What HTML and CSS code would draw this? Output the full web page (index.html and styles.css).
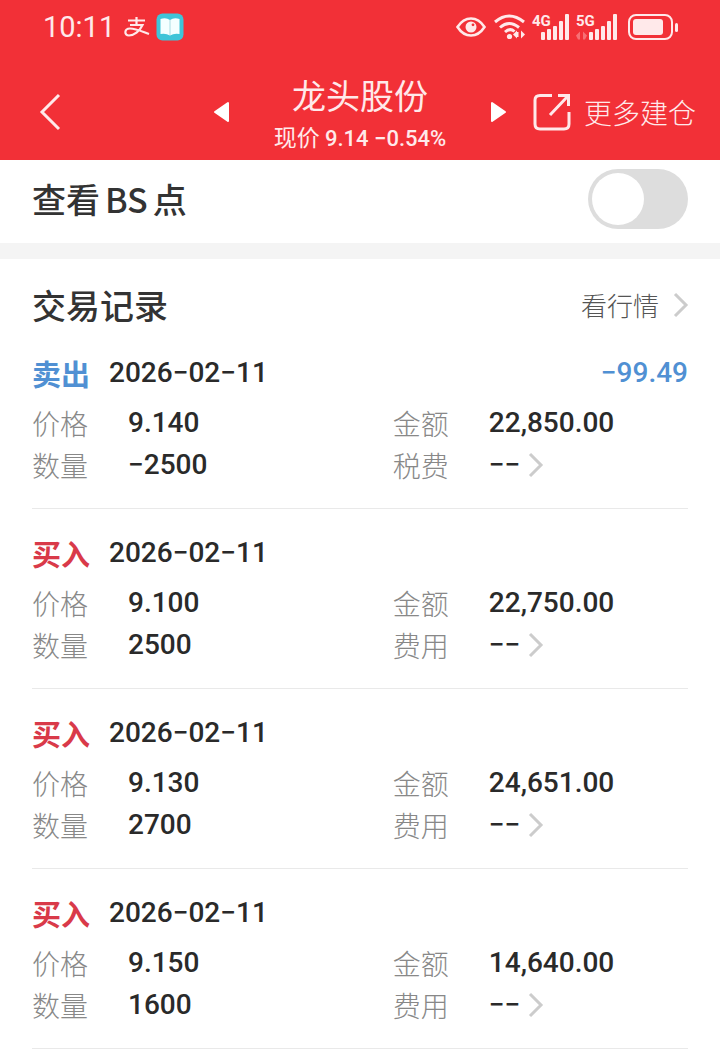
FILE: index.html
```html
<!DOCTYPE html>
<html lang="zh-CN">
<head>
<meta charset="utf-8">
<meta name="viewport" content="width=device-width, initial-scale=1">
<title>龙头股份</title>
<link rel="stylesheet" href="styles.css">
</head>
<body>
<header class="top">
  <div class="status">
    <div class="status-left">
      <time class="clock">10:11</time>
      <svg class="pay" width="26" height="20" viewBox="0 0 26 20" fill="none" stroke="currentColor" stroke-width="2.200"><path d="M4 3.500h17M12.500 0v8M6 8h12.500C15.500 14.500 10 18.500 5 18.500 0 18.500 0 11.500 6 11.500 12 11.500 18 14.500 25 17"/></svg>
      <svg width="28" height="28" viewBox="0 0 28 28"><rect width="27" height="27" x=".5" y=".5" rx="6" fill="#3fc4d8"/><path d="M4.500 6Q10 4 14 7 18 4 23.500 6V21Q18 20 14 22.500 10 20 4.500 21Z" fill="#f4ffff"/><path d="M14 7v15" stroke="#a8dce2"/></svg>
    </div>
    <div class="status-right">
      <svg width="30" height="20" viewBox="0 0 30 20" fill="none" stroke="currentColor"><path d="M1.500 10Q7 1.500 15 1.500T28.500 10Q23 18.500 15 18.500T1.500 10Z" stroke-width="2.600"/><circle cx="15" cy="10" r="5.500" fill="currentColor" stroke="none"/><circle cx="17" cy="7.800" r="1.400" fill="#f23037" stroke="none"/></svg>
      <svg width="32" height="26" viewBox="0 0 32 26" fill="none" stroke="currentColor" stroke-width="3"><path d="M1 8Q15-4 30 8M6 13.500Q15 5.500 25 13.500M11 18Q16 13.500 20.500 17.500"/><circle cx="15.500" cy="22.500" r="2.600" fill="currentColor" stroke="none"/><path d="M19 20.500l4-4v8zM31 20.500l-4-4v8zM23 18h1.500v5H23z" fill="currentColor" stroke="none"/></svg>
      <svg class="signal" width="38" height="28" viewBox="0 0 38 28" fill="currentColor"><text x="0" y="13">4G</text><rect x="9" y="19" width="4" height="8" rx="1"/><rect x="15" y="16" width="4" height="11" rx="1"/><rect x="21" y="13" width="4" height="14" rx="1"/><rect x="27" y="8" width="4" height="19" rx="1"/><rect x="33" y="1" width="4" height="26" rx="1"/></svg>
      <svg class="signal" width="42" height="28" viewBox="0 0 42 28" fill="currentColor"><text x="0" y="13">5G</text><path d="M0 22.500l4-4v8h-2zM11 22.500l-4-4v8h2z" opacity=".35"/><rect x="13" y="19" width="4" height="8" rx="1"/><rect x="19" y="16" width="4" height="11" rx="1"/><rect x="25" y="13" width="4" height="14" rx="1"/><rect x="31" y="8" width="4" height="19" rx="1"/><rect x="37" y="1" width="4" height="26" rx="1"/></svg>
      <svg class="battery" width="52" height="26" viewBox="0 0 52 26"><rect x="1" y="1" width="43" height="24" rx="7" fill="none" stroke="currentColor" stroke-width="2"/><rect x="5" y="5" width="30" height="16" rx="3" fill="currentColor"/><rect x="47" y="9" width="3" height="9" rx="1.500" fill="currentColor"/></svg>
    </div>
  </div>
  <nav class="bar">
    <button class="icon-btn back" aria-label="返回"><svg width="22" height="36" viewBox="0 0 22 36" fill="none" stroke="currentColor" stroke-width="3"><path d="M20 1 3 18 20 35"/></svg></button>
    <div class="stock">
      <button class="icon-btn" aria-label="上一只"><svg width="18" height="22" viewBox="0 0 18 22"><path d="M15 2v18L2 11Z" fill="#fff" stroke="#fff" stroke-width="2" stroke-linejoin="round"/></svg></button>
      <div class="stock-name">
        <h1>龙头股份</h1>
        <p>现价 <span class="quote">9.14 −0.54%</span></p>
      </div>
      <button class="icon-btn" aria-label="下一只"><svg width="18" height="22" viewBox="0 0 18 22"><path d="M3 2v18l13-9Z" fill="#fff" stroke="#fff" stroke-width="2" stroke-linejoin="round"/></svg></button>
    </div>
    <button class="more"><svg width="38" height="38" viewBox="0 0 38 38" fill="none" stroke="currentColor" stroke-width="3"><path d="M19 2.500H7Q2 2.500 2 7V31Q2 36 7 36H31Q36 36 36 31V19M17 22 35 3M25 2.500H35.500V13"/></svg>更多建仓</button>
  </nav>
</header>
<main>
  <label class="toggle-row"><span>查看<span class="latin">BS</span>点</span><input class="switch" type="checkbox" role="switch"></label>
  <section class="records">
    <div class="section-head">
      <h2>交易记录</h2>
      <a class="market" href="#market">看行情<svg class="chevron" width="14" height="24" viewBox="0 0 14 24"><path d="M1 1 12 12 1 23"/></svg></a>
    </div>
    <article class="record">
      <header class="record-head"><h3 class="sell">卖出</h3><time datetime="2026-02-11">2026−02−11</time><strong class="profit">−99.49</strong></header>
      <dl class="facts">
        <div><dt>价格</dt><dd>9.140</dd></div>
        <div><dt>金额</dt><dd>22,850.00</dd></div>
        <div><dt>数量</dt><dd>−2500</dd></div>
        <div><dt>税费</dt><dd><a class="fee" href="#fee1">−−<svg class="chevron" width="14" height="24" viewBox="0 0 14 24"><path d="M1 1 12 12 1 23"/></svg></a></dd></div>
      </dl>
    </article>
    <article class="record">
      <header class="record-head"><h3 class="buy">买入</h3><time datetime="2026-02-11">2026−02−11</time></header>
      <dl class="facts">
        <div><dt>价格</dt><dd>9.100</dd></div>
        <div><dt>金额</dt><dd>22,750.00</dd></div>
        <div><dt>数量</dt><dd>2500</dd></div>
        <div><dt>费用</dt><dd><a class="fee" href="#fee2">−−<svg class="chevron" width="14" height="24" viewBox="0 0 14 24"><path d="M1 1 12 12 1 23"/></svg></a></dd></div>
      </dl>
    </article>
    <article class="record">
      <header class="record-head"><h3 class="buy">买入</h3><time datetime="2026-02-11">2026−02−11</time></header>
      <dl class="facts">
        <div><dt>价格</dt><dd>9.130</dd></div>
        <div><dt>金额</dt><dd>24,651.00</dd></div>
        <div><dt>数量</dt><dd>2700</dd></div>
        <div><dt>费用</dt><dd><a class="fee" href="#fee3">−−<svg class="chevron" width="14" height="24" viewBox="0 0 14 24"><path d="M1 1 12 12 1 23"/></svg></a></dd></div>
      </dl>
    </article>
    <article class="record">
      <header class="record-head"><h3 class="buy">买入</h3><time datetime="2026-02-11">2026−02−11</time></header>
      <dl class="facts">
        <div><dt>价格</dt><dd>9.150</dd></div>
        <div><dt>金额</dt><dd>14,640.00</dd></div>
        <div><dt>数量</dt><dd>1600</dd></div>
        <div><dt>费用</dt><dd><a class="fee" href="#fee4">−−<svg class="chevron" width="14" height="24" viewBox="0 0 14 24"><path d="M1 1 12 12 1 23"/></svg></a></dd></div>
      </dl>
    </article>
  </section>
</main>
</body>
</html>
```
FILE: styles.css
```css
* { box-sizing: border-box; }
body, h1, h2, h3, p, dl, dd { margin: 0; }
body {
  background: #fff;
  color: #333;
  font-family: "Noto Sans CJK SC", sans-serif;
  font-size: 28px;
}
button {
  padding: 0;
  border: 0;
  background: none;
  color: inherit;
  font: inherit;
}
a { color: inherit; text-decoration: none; }
svg { display: block; flex: none; overflow: visible; }

.top { background: #f23037; color: #ffe9ea; }
.status {
  display: flex;
  justify-content: space-between;
  align-items: center;
  height: 56px;
  padding: 0 40px 2px 43px;
}
.status-left, .status-right { display: flex; align-items: center; }
.status-left { gap: 6px; }
.status-right { gap: 8px; }
.clock { font: 400 29px/40px Roboto, sans-serif; }
.pay { margin-left: 3px; }
.signal { margin-left: -2px; }
.signal text { font: 700 15px Roboto, sans-serif; }
.battery { margin-left: 2px; }

.bar {
  display: grid;
  grid-template-columns: 1fr auto 1fr;
  align-items: center;
  height: 104px;
  padding: 8px 24px 0;
}
.icon-btn { display: flex; align-items: center; }
.back { justify-self: start; margin-left: 15px; }
.stock {
  display: flex;
  align-items: center;
  justify-content: space-between;
  width: 294px;
}
.stock-name { padding-top: 6px; text-align: center; }
.stock-name h1 { font-size: 34px; font-weight: 400; line-height: 44px; }
.stock-name p { font-size: 23px; line-height: 38px; }
.quote { font-family: Roboto, sans-serif; font-size: 22px; font-weight: 500; }
.more {
  display: flex;
  align-items: center;
  justify-self: end;
  gap: 13px;
  font-size: 28px;
  font-weight: 300;
  white-space: nowrap;
}

.toggle-row {
  display: flex;
  align-items: center;
  justify-content: space-between;
  padding: 9px 32px 14px;
  border-bottom: 16px solid #f4f4f4;
  font-size: 34px;
  font-weight: 500;
  line-height: 60px;
}
.latin { margin: 0 5px; }
.switch {
  appearance: none;
  width: 100px;
  height: 60px;
  margin: 0;
  padding: 4px;
  border-radius: 30px;
  background: #ddd;
}
.switch::before {
  content: "";
  display: block;
  width: 52px;
  height: 52px;
  border-radius: 50%;
  background: #fff;
}
.switch:checked { background: #f23037; }
.switch:checked::before { margin-left: auto; }

.records { padding: 0 32px; }
.section-head {
  display: flex;
  align-items: center;
  justify-content: space-between;
  padding-top: 22px;
  line-height: 48px;
}
.section-head h2 { font-size: 34px; font-weight: 500; }
.market {
  display: flex;
  align-items: center;
  gap: 15px;
  color: #555;
  font-size: 26px;
  font-weight: 300;
}
.chevron { fill: none; stroke: #ccc; stroke-width: 3; }

.record { padding: 23px 0 22px; border-bottom: 1px solid #e9e9e9; line-height: 42px; }
.record-head { display: flex; align-items: center; margin-bottom: 8px; }
.record-head h3 { margin-right: 19px; font-size: 29px; font-weight: 700; }
.record-head time, .profit, .facts dd {
  font-family: Roboto, sans-serif;
  font-size: 28px;
  font-weight: 500;
}
.record-head time, .facts dd { color: #2a2a2a; }
.record-head .profit { margin-left: auto; color: #5090d3; }
.sell { color: #5090d3; }
.buy { color: #d93a49; }
.facts { display: grid; grid-template-columns: 55% 45%; }
.facts div { display: flex; }
.facts dt { width: 96px; color: #888; font-weight: 300; }
.fee { display: flex; align-items: center; gap: 9px; }
```
